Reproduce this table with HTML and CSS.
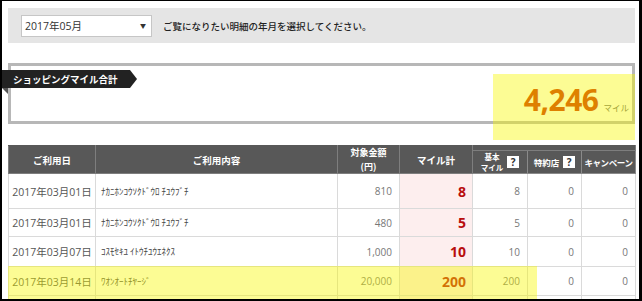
FILE: index.html
```html
<!DOCTYPE html>
<html lang="ja">
<head>
<meta charset="utf-8">
<title>ショッピングマイル明細</title>
<link rel="stylesheet" href="styles.css">
</head>
<body>
<div class="frame">
  <div class="filter">
    <div class="select"><span>2017年05月</span><span class="caret">▼</span></div>
    <p class="hint">ご覧になりたい明細の年月を選択してください。</p>
  </div>

  <section class="summary">
    <div class="ribbon">ショッピングマイル合計</div>
    <div class="total"><span class="num">4,246</span><span class="unit">マイル</span></div>
  </section>

  <table class="detail">
    <colgroup>
      <col class="c-date"><col class="c-shop"><col class="c-amount"><col class="c-sum"><col class="c-base"><col class="c-partner"><col class="c-camp">
    </colgroup>
    <thead>
      <tr class="h1">
        <th rowspan="2">ご利用日</th>
        <th rowspan="2">ご利用内容</th>
        <th rowspan="2" class="two">対象金額<br>(円)</th>
        <th rowspan="2">マイル計</th>
        <th colspan="3" class="group"></th>
      </tr>
      <tr class="h2">
        <th class="sub"><div class="subin"><span class="small">基本<br>マイル</span><span class="q">?</span></div></th>
        <th class="sub"><div class="subin"><span>特約店</span><span class="q">?</span></div></th>
        <th class="sub"><div class="subin"><span class="camp">キャンペーン</span></div></th>
      </tr>
    </thead>
    <tbody>
      <tr class="r1">
        <td class="date">2017年03月01日</td>
        <td class="shop">ﾅｶﾆﾎﾝｺｳｿｸﾄﾞｳﾛ ﾁﾕｳﾌﾞﾁ</td>
        <td>810</td>
        <td class="sum">8</td>
        <td>8</td>
        <td>0</td>
        <td>0</td>
      </tr>
      <tr class="r2">
        <td class="date">2017年03月01日</td>
        <td class="shop">ﾅｶﾆﾎﾝｺｳｿｸﾄﾞｳﾛ ﾁﾕｳﾌﾞﾁ</td>
        <td>480</td>
        <td class="sum">5</td>
        <td>5</td>
        <td>0</td>
        <td>0</td>
      </tr>
      <tr class="r3">
        <td class="date">2017年03月07日</td>
        <td class="shop">ｺｽﾓｾｷﾕ ｲﾄｳﾁﾕｳｴﾈｸｽ</td>
        <td>1,000</td>
        <td class="sum">10</td>
        <td>10</td>
        <td>0</td>
        <td>0</td>
      </tr>
      <tr class="r4">
        <td class="date">2017年03月14日</td>
        <td class="shop">ﾜｵﾝｵｰﾄﾁﾔｰｼﾞ</td>
        <td>20,000</td>
        <td class="sum">200</td>
        <td>200</td>
        <td>0</td>
        <td>0</td>
      </tr>
      <tr class="r5">
        <td></td><td></td><td></td><td class="sum"></td><td></td><td></td><td></td>
      </tr>
    </tbody>
  </table>

  <div class="marker marker-total"></div>
  <div class="marker marker-row"></div>
</div>
</body>
</html>
```

FILE: styles.css
```css
html, body {
  margin: 0;
  padding: 0;
  background: #fff;
}

body {
  font-family: "Open Sans", "Noto Sans CJK JP", sans-serif;
}

.frame {
  position: relative;
  width: 642px;
  height: 301px;
  box-sizing: border-box;
  border-style: solid;
  border-color: #000;
  border-width: 1px 3px 2px 2px;
  padding: 7px 4px 0 6px;
  overflow: hidden;
  background: #fff;
}

/* month filter */
.filter {
  height: 35px;
  background: #e5e5e5;
  display: flex;
  align-items: center;
  padding-left: 13px;
  gap: 11px;
}

.select {
  width: 131px;
  height: 22px;
  box-sizing: border-box;
  border: 1px solid #c6c6c6;
  background: #fff;
  display: flex;
  align-items: center;
  justify-content: space-between;
  padding: 0 5px 0 3px;
  font-size: 10.5px;
  color: #333;
}

.caret {
  font-size: 6px;
  color: #333;
}

.hint {
  margin: 0;
  font-family: "Noto Sans CJK JP", sans-serif;
  font-size: 9.5px;
  color: #222;
  font-weight: 500;
}

/* summary */
.summary {
  margin-top: 20px;
  height: 61px;
  box-sizing: border-box;
  border: 3px solid #b7b7b7;
}

.ribbon {
  position: relative;
  width: 128px;
  height: 18px;
  margin-top: 4px;
  margin-left: -9px;
  box-sizing: border-box;
  padding-left: 11px;
  background: #222;
  color: #fff;
  font-family: "Noto Sans CJK JP", sans-serif;
  font-weight: bold;
  font-size: 9.5px;
  line-height: 18px;
}

.ribbon::after {
  content: "";
  position: absolute;
  right: -7px;
  top: 0;
  border-style: solid;
  border-width: 9px 0 9px 7px;
  border-color: transparent transparent transparent #222;
}

.ribbon::before {
  content: "";
  position: absolute;
  left: 0;
  top: 18px;
  border-style: solid;
  border-width: 0 6px 6px 0;
  border-color: transparent #555 transparent transparent;
}

.total {
  display: flex;
  justify-content: flex-end;
  align-items: baseline;
  margin-top: -3px;
  padding-right: 3px;
}

.num {
  font-size: 30px;
  line-height: 30px;
  font-weight: bold;
  color: #cc2a00;
  letter-spacing: -0.5px;
}

.unit {
  margin-left: 5px;
  font-family: "Noto Sans CJK JP", sans-serif;
  font-size: 8.5px;
  color: #666;
}

/* detail table */
.detail {
  margin-top: 21px;
  width: 627px;
  table-layout: fixed;
  border-collapse: collapse;
}

.c-date { width: 87px; }
.c-shop { width: 242px; }
.c-amount { width: 62px; }
.c-sum { width: 73px; }
.c-base { width: 55px; }
.c-partner { width: 54px; }
.c-camp { width: 54px; }

.detail th {
  background: #585858;
  color: #fff;
  font-family: "Noto Sans CJK JP", sans-serif;
  font-weight: bold;
  font-size: 9.5px;
  border: 1px solid #7e7e7e;
  padding: 0;
  text-align: center;
  line-height: 12px;
}

.detail th.two {
  font-size: 9px;
  line-height: 13.2px;
}

.detail .h1 th {
  border-top-color: #585858;
}

.detail .h1 .group {
  height: 4px;
}

.detail .h2 th {
  height: 22px;
  border-color: #8a8a8a;
}

.subin {
  display: flex;
  align-items: center;
  justify-content: center;
  gap: 4px;
  white-space: nowrap;
  font-size: 8.5px;
}

.small {
  font-size: 7.5px;
  line-height: 11px;
}

.camp {
  letter-spacing: -0.4px;
}

.q {
  display: inline-block;
  width: 12px;
  height: 12px;
  background: #fff;
  color: #333;
  font-family: "Open Sans", sans-serif;
  font-weight: bold;
  font-size: 10px;
  line-height: 12px;
  text-align: center;
}

.detail td {
  border: 1px solid #dadada;
  padding: 0 7px 0 0;
  text-align: right;
  font-size: 10px;
  color: #777;
  white-space: nowrap;
}

.detail .r1 td { height: 34px; }
.detail .r2 td { height: 27px; }
.detail .r3 td { height: 29px; }
.detail .r4 td { height: 28px; }
.detail .r5 td { height: 28px; }

.detail td.date {
  text-align: center;
  padding: 0;
  font-size: 10.5px;
  color: #555;
}

.detail td.shop {
  text-align: left;
  padding-left: 5px;
  font-family: "Noto Sans CJK JP", sans-serif;
  font-size: 9px;
  color: #444;
}

.detail td.sum {
  background: #fdeeee;
  padding-right: 6px;
  font-size: 14px;
  font-weight: bold;
  color: #b80d0d;
}

/* highlighter marks on the screenshot */
.marker {
  position: absolute;
  background: rgba(248, 248, 0, 0.42);
  pointer-events: none;
}

.marker-total {
  left: 491px;
  top: 73px;
  width: 142px;
  height: 66px;
}

.marker-row {
  left: 6px;
  top: 265px;
  width: 529px;
  height: 40px;
}
```
